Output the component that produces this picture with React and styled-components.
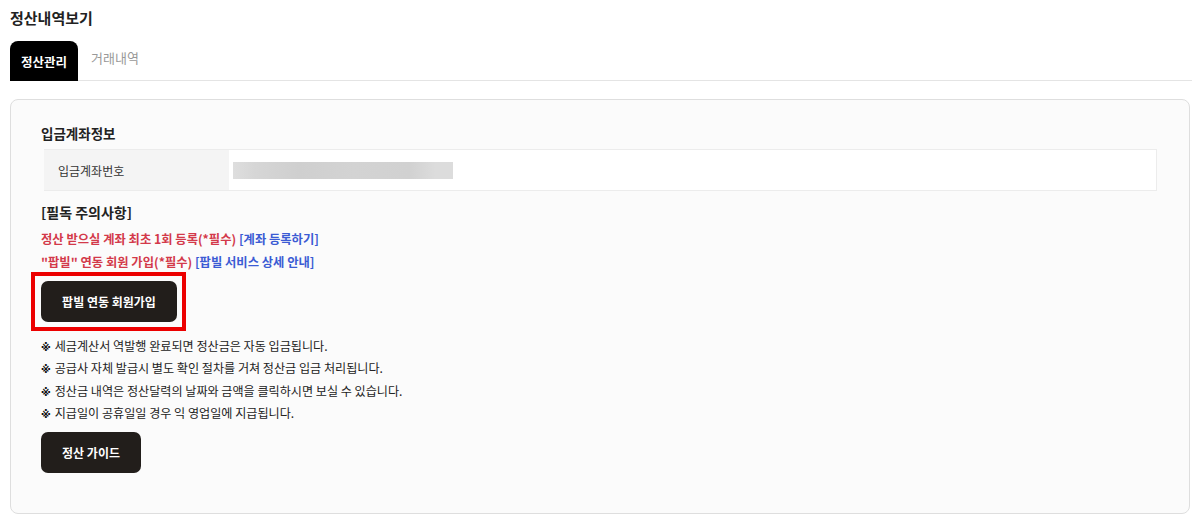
import React, { useState } from 'react'
import styled, { createGlobalStyle } from 'styled-components'

const GlobalStyle = createGlobalStyle`
	body {
		margin: 0;
		background: #ffffff;
		font-family: 'Noto Sans CJK KR', 'Noto Sans', sans-serif;
		color: #222;
	}
`

const notes = [
	'세금계산서 역발행 완료되면 정산금은 자동 입금됩니다.',
	'공급사 자체 발급시 별도 확인 절차를 거쳐 정산금 입금 처리됩니다.',
	'정산금 내역은 정산달력의 날짜와 금액을 클릭하시면 보실 수 있습니다.',
	'지급일이 공휴일일 경우 익 영업일에 지급됩니다.',
]

const App = () => {
	const [tab, setTab] = useState('settle')

	return (
		<Page>
			<GlobalStyle />
			<Title>정산내역보기</Title>
			<Tabs>
				<Tab active={tab === 'settle'} onClick={() => setTab('settle')}>
					정산관리
				</Tab>
				<Tab active={tab === 'history'} onClick={() => setTab('history')}>
					거래내역
				</Tab>
			</Tabs>

			<Card>
				<SectionTitle>입금계좌정보</SectionTitle>
				<InfoTable>
					<Label>입금계좌번호</Label>
					<Value>
						<Blurred />
					</Value>
				</InfoTable>

				<NoticeTitle>[필독 주의사항]</NoticeTitle>
				<Required first>
					정산 받으실 계좌 최초 1회 등록(*필수) <Link>[계좌 등록하기]</Link>
				</Required>
				<Required>
					"팝빌" 연동 회원 가입(*필수) <Link>[팝빌 서비스 상세 안내]</Link>
				</Required>

				<Highlight>
					<DarkButton>팝빌 연동 회원가입</DarkButton>
				</Highlight>

				<Notes>
					{notes.map((n) => (
						<Note key={n}>
							<Mark>※</Mark>
							<span>{n}</span>
						</Note>
					))}
				</Notes>

				<DarkButton wide>정산 가이드</DarkButton>
			</Card>
		</Page>
	)
}

const Page = styled.div`
	padding: 8px 7px 7px 10px;
`

const Title = styled.h1`
	margin: 0;
	font-size: 15px;
	font-weight: 700;
	line-height: 20px;
	color: #222;
`

const Tabs = styled.div`
	display: flex;
	margin-top: 13px;
	border-bottom: 1px solid #e4e4e4;
	height: 39px;
`

const Tab = styled.div`
	display: flex;
	align-items: center;
	justify-content: center;
	height: 40px;
	padding: 0 ${(p) => (p.active ? '11px' : '13px')};
	border-radius: 8px 8px 0 0;
	font-size: ${(p) => (p.active ? '12.5px' : '13px')};
	font-weight: ${(p) => (p.active ? 700 : 400)};
	color: ${(p) => (p.active ? '#fff' : '#999')};
	background: ${(p) => (p.active ? '#000' : 'transparent')};
	cursor: pointer;
	${(p) => !p.active && 'align-items: flex-start; padding-top: 7px; height: 33px;'}
`

const Card = styled.div`
	margin-top: 18px;
	margin-right: 2px;
	height: 415px;
	box-sizing: border-box;
	border: 1px solid #dedede;
	border-radius: 8px;
	background: #fbfbfb;
	padding: 23px 32px 0 30px;
`

const SectionTitle = styled.h2`
	margin: 0;
	font-size: 13.5px;
	font-weight: 700;
	line-height: 20px;
	color: #222;
`

const InfoTable = styled.div`
	display: grid;
	grid-template-columns: 185px 1fr;
	margin: 6px 0 0 3px;
	height: 42px;
	border-top: 1px solid #ececec;
	border-bottom: 1px solid #ececec;
	border-right: 1px solid #ececec;
	box-sizing: border-box;
`

const Label = styled.div`
	display: flex;
	align-items: center;
	padding-left: 14px;
	background: #f4f4f4;
	font-size: 12px;
	color: #333;
`

const Value = styled.div`
	display: flex;
	align-items: center;
	padding-left: 4px;
	background: #fff;
`

const Blurred = styled.div`
	width: 220px;
	height: 17px;
	background: linear-gradient(
		90deg,
		#dedede 0%,
		#d6d6d6 10%,
		#cfcfcf 30%,
		#d3d3d3 55%,
		#d1d1d1 80%,
		#dcdcdc 92%
	);
	filter: blur(0.6px);
`

const NoticeTitle = styled.h3`
	margin: 11px 0 0;
	font-size: 14px;
	font-weight: 700;
	line-height: 20px;
	color: #222;
`

const Required = styled.p`
	margin: ${(p) => (p.first ? '7px' : '3px')} 0 0;
	font-size: 12.3px;
	font-weight: 700;
	line-height: 20px;
	color: #d3394a;
`

const Link = styled.span`
	color: #3b5bd4;
	cursor: pointer;
`

const Highlight = styled.div`
	display: inline-block;
	margin: 0 0 0 -10px;
	padding: 5px 5px 5px 6px;
	border: 4px solid #ec0000;
`

const DarkButton = styled.button`
	display: flex;
	align-items: center;
	justify-content: center;
	width: ${(p) => (p.wide ? '100px' : '136px')};
	height: 41px;
	padding: 0;
	border: none;
	border-radius: 7px;
	background: #221e1b;
	color: #fff;
	font-family: inherit;
	font-size: 12px;
	font-weight: 700;
	cursor: pointer;
`

const Notes = styled.div`
	margin: 3px 0 8px;
`

const Note = styled.p`
	display: flex;
	align-items: center;
	gap: 4px;
	margin: 0;
	height: 22.5px;
	font-size: 12.1px;
	color: #222;
`

const Mark = styled.span`
	margin-top: 5px;
	font-family: 'DejaVu Sans', sans-serif;
	font-size: 10px;
	font-weight: 700;
	line-height: 1;
	color: #111;
`

export default App
